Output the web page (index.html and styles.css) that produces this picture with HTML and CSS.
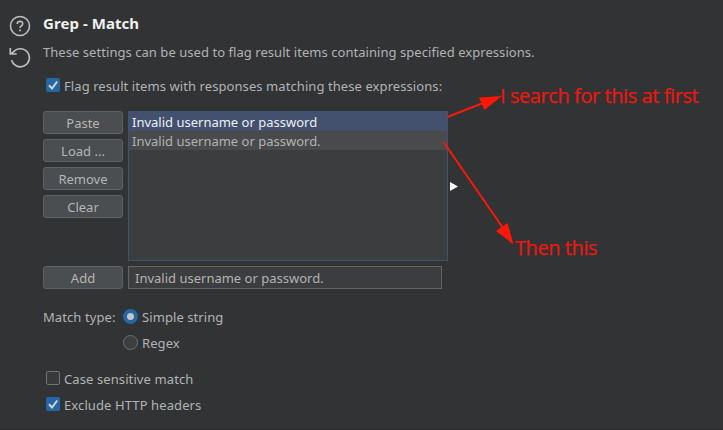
FILE: index.html
```html
<!DOCTYPE html>
<html lang="en">
<head>
<meta charset="utf-8">
<title>Grep - Match</title>
<link rel="stylesheet" href="styles.css">
</head>
<body>
<main class="panel">
  <aside class="tools">
    <svg width="22" height="22" viewBox="0 0 22 22" fill="none" stroke="#bcbebf"><circle cx="11" cy="11" r="9.500" stroke-width="1.600"/><path d="M8.200 9.100C8.200 5.500 13.700 5.500 13.700 8.800C13.700 11 11 10.800 11 13" stroke-width="1.600"/><path d="M11 14.600v1.700" stroke-width="1.800"/></svg>
    <svg width="22" height="22" viewBox="0 0 22 22" fill="none" stroke="#bcbebf" stroke-width="1.700"><path d="M1.300 2V8H7.700M1.600 7.800L4.300 6.100A9.030 9.030 0 1 1 2.600 14.100"/></svg>
  </aside>
  <section class="content">
    <h1>Grep - Match</h1>
    <p class="intro">These settings can be used to flag result items containing specified expressions.</p>
    <label class="check flag"><span class="box on"><svg width="14" height="14" viewBox="0 0 14 14"><path d="M3 7.300L6 10.500L11.200 3.500"/></svg></span><span>Flag result items with responses matching these expressions:</span></label>
    <div class="editor">
      <div class="buttons">
        <button>Paste</button>
        <button>Load ...</button>
        <button>Remove</button>
        <button>Clear</button>
      </div>
      <ul class="list">
        <li class="selected">Invalid username or password</li>
        <li class="alt">Invalid username or password.</li>
      </ul>
      <span class="expand"></span>
    </div>
    <div class="add">
      <button>Add</button>
      <div class="field">Invalid username or password.</div>
    </div>
    <div class="types">
      <span>Match type:</span>
      <div class="radios">
        <label><i class="radio on"></i>Simple string</label>
        <label><i class="radio"></i>Regex</label>
      </div>
    </div>
    <div class="options">
      <label class="check"><span class="box"></span><span>Case sensitive match</span></label>
      <label class="check"><span class="box on"><svg width="14" height="14" viewBox="0 0 14 14"><path d="M3 7.300L6 10.500L11.200 3.500"/></svg></span><span>Exclude HTTP headers</span></label>
    </div>
  </section>
  <svg class="arrows" width="723" height="430" viewBox="0 0 723 430"><path d="M447.500 117L483 103M443.500 142L503 228" stroke="#fc1708" stroke-width="2"/><path d="M502 96L479 97.500L484.500 110ZM513.500 244.500L496 231L507.500 223Z" fill="#fc1708"/></svg>
  <span class="note first">I search for this at first</span>
  <span class="note second">Then this</span>
</main>
</body>
</html>
```
FILE: styles.css
```css
* { box-sizing: border-box; }
body { margin: 0; background: #313335; color: #b2b3b3; font: 13px/20px "Noto Sans", sans-serif; }
.panel { position: relative; display: flex; width: 723px; height: 430px; overflow: hidden; border-bottom: 1px solid #2b292b; }
.tools { display: flex; flex-direction: column; gap: 9px; width: 43px; padding: 15px 0 0 9px; }
.tools svg { display: block; }
.content { width: 600px; padding-top: 13px; }
h1 { margin: 0; font-size: 15px; line-height: 20px; font-weight: 700; color: #f0f0f0; letter-spacing: .06px; }
.intro { margin: 9px 0 14px; white-space: nowrap; letter-spacing: .05px; }
.check { display: flex; align-items: center; gap: 4px; height: 20px; padding-left: 3px; white-space: nowrap; letter-spacing: .1px; }
.box { width: 14px; height: 14px; border: 1px solid #707274; border-radius: 2px; background: #37393b; margin-top: -2px; }
.box.on { border: 0; background: #2467a4; }
.box svg { display: block; fill: none; stroke: #d3d5d6; stroke-width: 2; }
.editor { display: flex; gap: 5px; margin-top: 15px; height: 150px; }
.buttons { display: flex; flex-direction: column; gap: 5px; }
button { display: block; width: 80px; height: 23px; padding: 0; border: 1px solid #5e6264; border-radius: 3px; background: #4a4e50; color: #b5b6b6; font: inherit; line-height: 22px; }
.list { width: 320px; height: 150px; margin: 0; padding: 0; list-style: none; border: 1px solid #43526f; background: #3c3d3e; }
.list li { height: 19px; line-height: 20px; padding-left: 3px; }
.list .selected { background: #43516f; color: #edf0f4; }
.list .alt { background: #484a4b; }
.expand { width: 8px; height: 9px; margin: 71px 0 0 -3px; background: #fff; clip-path: polygon(0 0, 100% 50%, 0 100%); }
.add { display: flex; gap: 5px; margin-top: 5px; }
.field { width: 314px; height: 23px; border: 1px solid #626466; background: #3c3d3e; padding-left: 6px; line-height: 22px; }
.types { display: flex; margin-top: 18px; letter-spacing: .08px; }
.types > span { width: 80px; }
.radios { display: flex; flex-direction: column; gap: 6px; }
.radios label { display: flex; align-items: center; gap: 4px; height: 20px; }
.radio { width: 15px; height: 15px; border-radius: 50%; border: 1px solid #6e7072; background: #3c3e3f; margin-top: -1px; }
.radio.on { border: 4px solid #2467a4; background: #c6c7c8; }
.options { display: flex; flex-direction: column; gap: 6px; margin-top: 16px; }
.flag { letter-spacing: .08px; }
.arrows { position: absolute; left: 0; top: 0; }
.note { position: absolute; color: #ed1710; font: 500 20px/26px "Open Sans", sans-serif; letter-spacing: -.42px; -webkit-text-stroke: .25px #ed1710; white-space: nowrap; }
.first { left: 500px; top: 83px; }
.second { left: 515px; top: 235px; }
```
